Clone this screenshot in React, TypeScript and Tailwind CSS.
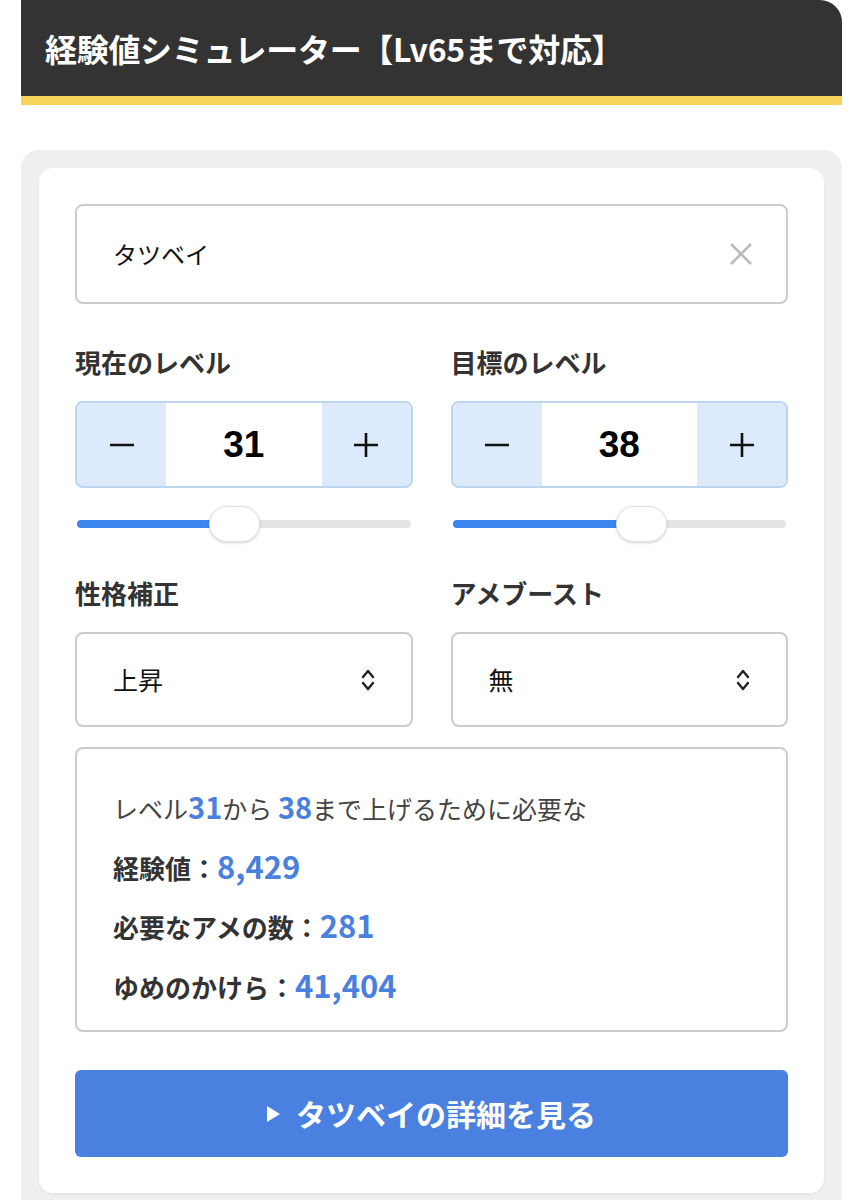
import { useState } from "react";

const JP = { fontFamily: '"Noto Sans CJK JP", "Noto Sans", sans-serif' };
const NUM = { fontFamily: '"Liberation Sans", Arial, sans-serif' };

const MIN = 1;
const MAX = 65;

function Stepper({ value }: { value: number }) {
  return (
    <div className="flex h-[87px] overflow-hidden rounded-[8px] border-2 border-[#bcd5ef]">
      <button className="flex w-[89px] items-center justify-center bg-[#dceafb]">
        <svg width="24" height="4" viewBox="0 0 24 4">
          <line x1="0" y1="2" x2="24" y2="2" stroke="#111" strokeWidth="2.6" />
        </svg>
      </button>
      <div className="flex flex-1 items-center justify-center bg-white text-[37px] font-bold text-black" style={NUM}>
        {value}
      </div>
      <button className="flex w-[89px] items-center justify-center bg-[#dceafb]">
        <svg width="24" height="24" viewBox="0 0 24 24">
          <line x1="0" y1="12" x2="24" y2="12" stroke="#111" strokeWidth="2.6" />
          <line x1="12" y1="0" x2="12" y2="24" stroke="#111" strokeWidth="2.6" />
        </svg>
      </button>
    </div>
  );
}

function Slider({ value }: { value: number }) {
  const ratio = (value - MIN) / (MAX - MIN);
  const thumb = 51;
  return (
    <div className="relative mx-[2px] h-[36px]">
      <div className="absolute left-0 right-0 top-[14px] h-[8px] rounded-full bg-[#e4e4e4]" />
      <div
        className="absolute left-0 top-[14px] h-[8px] rounded-full bg-[#3d86ef]"
        style={{ width: `calc(${ratio} * (100% - ${thumb}px) + ${thumb / 2}px)` }}
      />
      <div
        className="absolute top-0 h-[36px] w-[51px] rounded-full border border-[#e2e2e2] bg-white shadow-[0_1px_3px_rgba(0,0,0,0.18)]"
        style={{ left: `calc(${ratio} * (100% - ${thumb}px))` }}
      />
    </div>
  );
}

function SelectBox({ value }: { value: string }) {
  return (
    <div className="flex h-[95px] items-center justify-between rounded-[8px] border-2 border-[#cccccc] bg-white pl-[36px] pr-[36px]">
      <span className="text-[25px] text-[#111]">{value}</span>
      <svg width="14" height="24" viewBox="0 0 14 24">
        <polyline points="2,9 7,3 12,9" fill="none" stroke="#222" strokeWidth="2.4" strokeLinejoin="round" strokeLinecap="round" />
        <polyline points="2,15 7,21 12,15" fill="none" stroke="#222" strokeWidth="2.4" strokeLinejoin="round" strokeLinecap="round" />
      </svg>
    </div>
  );
}

export default function App() {
  const [name] = useState("タツベイ");
  const current = 31;
  const target = 38;

  return (
    <div className="min-h-[1200px] bg-white px-[21px] pr-[20px]" style={JP}>
      <div className="flex h-[105px] items-center rounded-tr-[22px] border-b-[9px] border-[#f7d35a] bg-[#333333] pl-[24px]">
        <h1 className="text-[32px] font-bold tracking-[-0.3px] text-white">経験値シミュレーター【Lv65まで対応】</h1>
      </div>

      <div className="mt-[45px] rounded-t-[18px] bg-[#efefef] px-[18px] pt-[18px] pb-[20px]">
        <div className="rounded-[14px] bg-white px-[36px] pt-[36px] pb-[36px] shadow-[0_1px_3px_rgba(0,0,0,0.06)]">
          <div className="flex h-[100px] items-center justify-between rounded-[8px] border-2 border-[#cccccc] pl-[36px] pr-[34px]">
            <span className="text-[24px] text-[#111]">{name}</span>
            <svg width="22" height="22" viewBox="0 0 22 22">
              <line x1="1" y1="1" x2="21" y2="21" stroke="#bbbbbb" strokeWidth="2.6" />
              <line x1="21" y1="1" x2="1" y2="21" stroke="#bbbbbb" strokeWidth="2.6" />
            </svg>
          </div>

          <div className="mt-[40px] grid grid-cols-2 gap-x-[38px]">
            <div>
              <div className="h-[36px] text-[26px] font-bold leading-[36px] text-[#333]">現在のレベル</div>
              <div className="mt-[21px]">
                <Stepper value={current} />
              </div>
              <div className="mt-[18px]">
                <Slider value={current} />
              </div>
            </div>
            <div>
              <div className="h-[36px] text-[26px] font-bold leading-[36px] text-[#333]">目標のレベル</div>
              <div className="mt-[21px]">
                <Stepper value={target} />
              </div>
              <div className="mt-[18px]">
                <Slider value={target} />
              </div>
            </div>
          </div>

          <div className="mt-[33px] grid grid-cols-2 gap-x-[38px]">
            <div>
              <div className="h-[36px] text-[26px] font-bold leading-[36px] text-[#333]">性格補正</div>
              <div className="mt-[21px]">
                <SelectBox value="上昇" />
              </div>
            </div>
            <div>
              <div className="h-[36px] text-[26px] font-bold leading-[36px] text-[#333]">アメブースト</div>
              <div className="mt-[21px]">
                <SelectBox value="無" />
              </div>
            </div>
          </div>

          <div className="mt-[20px] h-[285px] rounded-[8px] border-2 border-[#cccccc] px-[36px] pt-[32px]">
            <p className="h-[59px] text-[25px] leading-[55px] text-[#444]">
              レベル<span className="text-[29px] font-bold leading-none text-[#4a80de]">{current}</span>から{" "}
              <span className="text-[29px] font-bold leading-none text-[#4a80de]">{target}</span>まで上げるために必要な
            </p>
            <p className="h-[59px] text-[26px] font-bold leading-[55px] text-[#333]">
              経験値：<span className="text-[31px] leading-none text-[#4a80de]">8,429</span>
            </p>
            <p className="h-[60px] text-[26px] font-bold leading-[55px] text-[#333]">
              必要なアメの数：<span className="text-[31px] leading-none text-[#4a80de]">281</span>
            </p>
            <p className="h-[59px] text-[26px] font-bold leading-[55px] text-[#333]">
              ゆめのかけら：<span className="text-[31px] leading-none text-[#4a80de]">41,404</span>
            </p>
          </div>

          <button className="mt-[38px] flex h-[87px] w-full items-center justify-center gap-[16px] rounded-[6px] bg-[#4a80e0] text-[30px] font-bold text-white">
            <svg width="13" height="16" viewBox="0 0 13 16">
              <polygon points="0,0 13,8 0,16" fill="#fff" />
            </svg>
            <span>{name}の詳細を見る</span>
          </button>
        </div>
      </div>
    </div>
  );
}
